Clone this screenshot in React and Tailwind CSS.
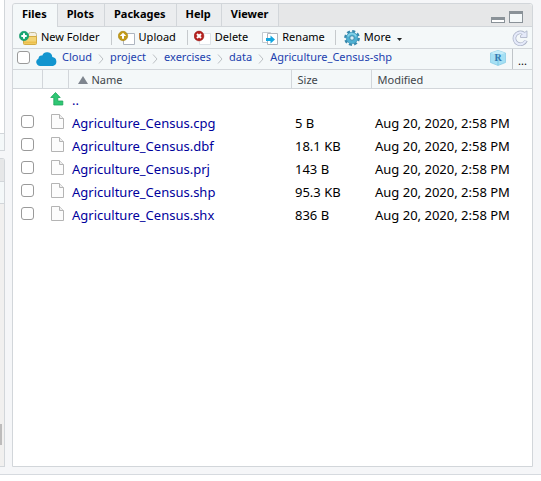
import React from "react";

const FILES = [
  { name: "Agriculture_Census.cpg", size: "5 B" },
  { name: "Agriculture_Census.dbf", size: "18.1 KB" },
  { name: "Agriculture_Census.prj", size: "143 B" },
  { name: "Agriculture_Census.shp", size: "95.3 KB" },
  { name: "Agriculture_Census.shx", size: "836 B" },
];
const MODIFIED = "Aug 20, 2020, 2:58 PM";
const CRUMBS = ["project", "exercises", "data", "Agriculture_Census-shp"];

function Check({ label, className = "" }) {
  return (
    <input
      type="checkbox"
      aria-label={label}
      className={"block size-[13px] shrink-0 appearance-none rounded-[3px] border border-[#9a9a9a] bg-white checked:bg-blue-600 " + className}
    />
  );
}

function NewFolderIcon() {
  return (
    <svg width="19" height="16" viewBox="0 0 19 16" className="shrink-0">
      <path d="M9.5 7V4.500q0-2 2-2h4q2 0 2 2V7z" fill="#f4efe0" stroke="#c5b98f" />
      <path d="M4.500 6.500h13v7q0 1-1 1h-11q-1 0-1-1z" fill="#f3d476" stroke="#d3ac43" />
      <path d="M5 12.500h12" stroke="#ecc04c" strokeWidth="2" />
      <circle cx="5" cy="6" r="4.700" fill="#17a672" stroke="#0f9162" strokeWidth=".5" />
      <path d="M5 3.300v5.400M2.300 6h5.400" stroke="#fff" strokeWidth="2" />
    </svg>
  );
}

function UploadIcon() {
  return (
    <svg width="17" height="16" viewBox="0 0 17 16" className="shrink-0">
      <path d="M5.500 3.500h11v11h-11z" fill="#fff" stroke="#aeb5c0" />
      <circle cx="5" cy="6" r="4.700" fill="#c29a17" stroke="#a8830e" strokeWidth=".6" />
      <path d="M5 2.800 8.200 6H6v2.700H4V6H1.800z" fill="#fff" />
    </svg>
  );
}

function DeleteIcon() {
  return (
    <svg width="17" height="16" viewBox="0 0 17 16" className="shrink-0">
      <path d="M5.500 3.500h11v11h-11z" fill="#fff" stroke="#dde2e7" />
      <circle cx="5" cy="6" r="4.900" fill="#b5221f" stroke="#921713" strokeWidth=".5" />
      <path d="m3 4 4 4m0-4-4 4" stroke="#fff" strokeWidth="2" />
    </svg>
  );
}

function RenameIcon() {
  return (
    <svg width="16" height="16" viewBox="0 0 16 16" className="shrink-0">
      <path d="M.5 2.500h8v10h-8z" fill="#fff" stroke="#c4cad0" />
      <path d="M5.500 3.500h10v11h-10z" fill="#fff" stroke="#aeb5bd" />
      <path d="M4 8h4.500V5.500l4.500 4-4.500 4V11H4z" fill="#14a7e0" />
    </svg>
  );
}

function GearIcon() {
  return (
    <svg width="16" height="16" viewBox="0 0 16 16" className="shrink-0">
      <circle cx="8" cy="8" r="6.600" fill="none" stroke="#3989ad" strokeWidth="2.600" strokeDasharray="3 2.184" />
      <circle cx="8" cy="8" r="5.800" fill="#4fb0d2" stroke="#3f93b8" strokeWidth=".7" />
      <path d="M3.800 6.500a4.600 4.600 0 0 1 8.400 0" fill="none" stroke="#86d3e8" strokeWidth="1.600" />
      <circle cx="8" cy="8" r="2.200" fill="#d9eff6" stroke="#367fa2" strokeWidth=".8" />
    </svg>
  );
}

function Separator({ className = "" }) {
  return <span className={"h-[15px] w-px shrink-0 bg-[#c6cacd] " + className} />;
}

function Chevron() {
  return (
    <svg width="6" height="10" viewBox="0 0 6 10" className="mx-1.5 mt-1 shrink-0">
      <path d="m1 .5 4 4.500-4 4.500" fill="none" stroke="#bcc0c4" />
    </svg>
  );
}

function CloudIcon() {
  return (
    <svg width="21" height="14" viewBox="0 0 21 14" className="shrink-0">
      <path d="M4.200 14a4 4 0 0 1-1.700-7.600A3.300 3.300 0 0 1 6.300 3.500 5.200 5.200 0 0 1 16.300 5 4.600 4.600 0 0 1 17 14z" fill="#1295cf" />
    </svg>
  );
}

function ProjectIcon() {
  return (
    <svg width="16" height="16" viewBox="0 0 16 16" className="shrink-0">
      <path d="M8 .5 15.500 3v9.500L8 15.500.5 12.500V3z" fill="#a5e0f4" stroke="#82c9e4" strokeWidth=".7" />
      <path d="M.8 3 8 5.500 15.200 3 8 .6z" fill="#c6edf9" />
      <path d="M8 5.500v9.700" stroke="#7bc8e5" />
      <text x="8" y="11" textAnchor="middle" fontFamily="Liberation Serif, serif" fontSize="10" fontWeight="bold" fill="#3279b0">R</text>
    </svg>
  );
}

function RefreshIcon() {
  return (
    <svg width="16" height="16" viewBox="0 0 16 16" className="shrink-0">
      <path d="M14 10.600A6 6 0 1 1 11.600 3.200" fill="none" stroke="#a9b1c5" strokeWidth="3.600" />
      <path d="M15 .8v6.700H8.500V5.500l2-1.500z" fill="#e5eafa" stroke="#a9b1c5" strokeWidth=".8" />
      <path d="M13.700 10.600A5.900 5.900 0 1 1 12 3.800" fill="none" stroke="#e5eafa" strokeWidth="2.200" />
    </svg>
  );
}

function FileIcon() {
  return (
    <svg width="13" height="15" viewBox="0 0 13 15" className="block">
      <path d="M.5.500h8l4 4v10H.5z" fill="#fcfcfc" stroke="#b4b4b4" />
      <path d="M8.500.5v4h4" fill="#eee" stroke="#b4b4b4" />
    </svg>
  );
}

function UpIcon() {
  return (
    <svg width="14" height="14" viewBox="0 0 14 14" className="block">
      <path d="M5.500.500 10.200 5.500H7.800V9h5v4h-9V5.500H.8z" fill="#2fc774" stroke="#1ca65a" strokeWidth=".8" />
    </svg>
  );
}

function Tab({ children, active }) {
  return (
    <button
      role="tab"
      aria-selected={!!active}
      className={
        "border-r border-[#d2d6da] pr-2.5 pl-[9px] pb-0.5 text-[11px] font-bold text-black " +
        (active ? "-mb-px rounded-tl-[3px] bg-[#f4f8f9]" : "bg-[#ebedef]")
      }
    >
      {children}
    </button>
  );
}

export default function App() {
  return (
    <div className="flex h-screen flex-col bg-white pb-1.5 font-['Noto_Sans','Open_Sans',sans-serif] text-[11px] text-black">
      <div className="flex min-h-0 flex-1 gap-[7px] border-b border-[#d6dadf] bg-[#f5f6f8] pr-2 pb-[7px]">
        <aside className="flex w-[5px] shrink-0 flex-col gap-[7px]">
          <div className="flex h-[151px] flex-col border-r border-b border-[#d2d6da] bg-white">
            <div className="mt-auto h-[17px] border-t border-[#d2d6da] bg-[#f4f8f9]" />
          </div>
          <div className="flex flex-1 flex-col rounded-tr-[3px] border-t border-r border-b border-[#d2d6da] bg-[#f1f0ef]">
            <div className="h-[23px] border-b border-[#d2d6da] bg-[#e6e7e8]" />
            <div className="h-[22px] border-b border-[#d2d6da] bg-[#f4f8f9]" />
            <div className="mt-auto mb-[21px] h-[21px] w-0.5 bg-[#bdbcbc]" />
          </div>
        </aside>

        <main className="mt-[3px] flex min-w-0 flex-1 flex-col rounded-t-[3px] border border-[#d2d6da] bg-white">
          <div className="flex h-[23px] shrink-0 rounded-t-[3px] border-b border-[#d2d6da] bg-[#e6e7e8]">
            <div role="tablist" className="flex">
              <Tab active>Files</Tab>
              <Tab>Plots</Tab>
              <Tab>Packages</Tab>
              <Tab>Help</Tab>
              <Tab>Viewer</Tab>
            </div>
            <div className="ml-auto flex items-end gap-1 pr-[9px] pb-[3px]">
              <button aria-label="Minimize" className="h-1.5 w-3.5 border border-t-[3px] border-[#8a9298] bg-white" />
              <button aria-label="Maximize" className="h-3 w-3.5 border border-t-[3px] border-[#8a9298] bg-[#f4f8f9]" />
            </div>
          </div>

          <div className="flex h-[22px] shrink-0 items-center border-b border-[#d2d6da] bg-[#f4f8f9] pr-1 pl-1.5 whitespace-nowrap">
            <button className="flex items-center gap-[3px]"><NewFolderIcon />New Folder</button>
            <Separator className="mr-1.5 ml-[11px]" />
            <button className="flex items-center gap-1"><UploadIcon />Upload</button>
            <Separator className="mr-1.5 ml-[11px]" />
            <button className="flex items-center gap-1"><DeleteIcon />Delete</button>
            <button className="ml-3.5 flex items-center gap-1"><RenameIcon />Rename</button>
            <Separator className="mr-2 ml-2.5" />
            <button className="flex items-center gap-1">
              <GearIcon />More
              <svg width="5" height="3" viewBox="0 0 5 3" className="mt-1 ml-0.5"><path d="M0 0h5L2.500 3z" fill="#222" /></svg>
            </button>
            <button aria-label="Refresh" className="ml-auto"><RefreshIcon /></button>
          </div>

          <div className="flex h-[21px] shrink-0 border-b border-[#d2d6da] bg-[#f4f8f9]">
            <nav className="flex min-w-0 flex-1 items-center pb-1 pl-1 whitespace-nowrap text-[#1b3fae]">
              <Check label="Select all files" />
              <a href="#cloud" className="ml-1.5 flex items-center gap-[5px]"><span className="pt-1"><CloudIcon /></span>Cloud</a>
              {CRUMBS.map((c) => (
                <React.Fragment key={c}>
                  <Chevron />
                  <a href={"#" + c}>{c}</a>
                </React.Fragment>
              ))}
            </nav>
            <button aria-label="Project" className="mr-1.5 pb-0.5"><ProjectIcon /></button>
            <button className="w-5 border-l border-[#bfc4c8] pt-1">...</button>
          </div>

          <table className="w-full table-fixed border-collapse text-left text-[13px] whitespace-nowrap">
            <colgroup>
              <col className="w-[29px]" />
              <col className="w-[26px]" />
              <col className="w-[223px]" />
              <col className="w-20" />
              <col />
            </colgroup>
            <thead>
              <tr className="h-[19px] bg-[#f4f8f9] text-[11px] text-[#3f4549] shadow-[inset_0_-1px_#d2d6da]">
                <th className="border-r border-[#d2d6da] p-0" />
                <th className="border-r border-[#d2d6da] p-0" />
                <th className="border-r border-[#d2d6da] p-0 pl-[9px] leading-[18px] font-normal">
                  <span className="flex items-center gap-1">
                    <svg width="10" height="8" viewBox="0 0 10 8"><path d="M5 0l5 8H0z" fill="#7e858e" /></svg>
                    Name
                  </span>
                </th>
                <th className="border-r border-[#d2d6da] p-0 pl-1.5 leading-[18px] font-normal">Size</th>
                <th className="p-0 pl-1.5 leading-[18px] font-normal">Modified</th>
              </tr>
            </thead>
            <tbody>
              <tr className="h-[23px]">
                <td className="p-0" />
                <td className="p-0 pb-1 pl-2"><UpIcon /></td>
                <td className="p-0 pl-1"><a href="#up" className="text-[#00009c]">..</a></td>
                <td className="p-0" />
                <td className="p-0" />
              </tr>
              {FILES.map((f) => (
                <tr key={f.name} className="h-[23px]">
                  <td className="p-0 pb-1 pl-2"><Check label={"Select " + f.name} /></td>
                  <td className="p-0 pb-1 pl-[9px]"><FileIcon /></td>
                  <td className="p-0 pl-1"><a href={"#" + f.name} className="text-[#00009c]">{f.name}</a></td>
                  <td className="p-0 pl-1">{f.size}</td>
                  <td className="p-0 pl-1">{MODIFIED}</td>
                </tr>
              ))}
            </tbody>
          </table>
        </main>
      </div>
    </div>
  );
}
